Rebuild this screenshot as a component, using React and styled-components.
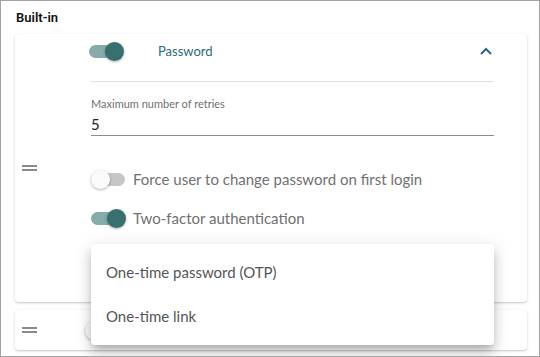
import React from 'react';
import styled, { createGlobalStyle } from 'styled-components';

const GlobalStyle = createGlobalStyle`
  html, body {
    margin: 0;
    padding: 0;
    background: #fff;
  }
  body {
    font-family: "Lato", "Open Sans", sans-serif;
  }
`;

const Frame = styled.div`
  width: 540px;
  height: 357px;
  box-sizing: border-box;
  border: 1px solid #a3a3a3;
  padding: 0 12px 0 14px;
  overflow: hidden;
  background: #fff;
`;

const SectionTitle = styled.h3`
  margin: 0;
  padding: 9px 0 0 1px;
  height: 25px;
  box-sizing: border-box;
  font-family: "Roboto", sans-serif;
  font-weight: 600;
  font-size: 13px;
  line-height: 16px;
  color: #111;
`;

const List = styled.div`
  display: flex;
  flex-direction: column;
  gap: 8px;
  padding-top: 8px;
`;

const Card = styled.div`
  position: relative;
  display: flex;
  align-items: center;
  height: ${p => p.$height}px;
  background: #fff;
  border-radius: 4px;
  box-shadow: 0 1px 3px rgba(0, 0, 0, 0.18), 0 1px 1px rgba(0, 0, 0, 0.06);
`;

const Handle = styled.div`
  flex: 0 0 15px;
  height: 6px;
  margin: 0 ${p => p.$gap}px 0 7px;
  border-top: 2px solid #8a8a8a;
  border-bottom: 2px solid #8a8a8a;
  box-sizing: border-box;
`;

const Body = styled.div`
  position: relative;
  align-self: stretch;
  flex: 1;
  margin-right: 33px;
`;

const Header = styled.div`
  display: flex;
  align-items: center;
  height: 20px;
  padding-top: 7px;
`;

const Title = styled.span`
  flex: 1;
  margin-left: 35px;
  font-size: 13px;
  color: #2c6a78;
`;

const Chevron = styled.svg`
  margin-right: 2px;
`;

const Divider = styled.div`
  height: 1px;
  margin: 20px 0 0 2px;
  background: #dedede;
`;

const Field = styled.div`
  margin: 15px 0 0 2px;
  border-bottom: 1px solid #8c8c8c;
`;

const FieldLabel = styled.div`
  font-size: 11px;
  line-height: 14px;
  color: #6f6f6f;
`;

const FieldValue = styled.div`
  padding: 4px 0 2px;
  font-size: 15px;
  line-height: 18px;
  color: #222;
`;

const OptionRow = styled.div`
  display: flex;
  align-items: center;
  gap: 8px;
  margin-top: ${p => p.$top}px;
  margin-left: ${p => p.$indent || 0}px;
  font-size: 15px;
  color: #707070;
`;

const Track = styled.span`
  position: relative;
  flex: 0 0 34px;
  width: 34px;
  height: 13px;
  border-radius: 7px;
  background: ${p => (p.$on ? '#86abab' : '#c6c6c6')};
`;

const Thumb = styled.span`
  position: absolute;
  top: 50%;
  left: ${p => (p.$on ? '16px' : '0')};
  width: 19px;
  height: 19px;
  margin-top: -9.5px;
  border-radius: 50%;
  background: ${p => (p.$on ? '#37706f' : '#fafafa')};
  box-shadow: 0 1px 3px rgba(0, 0, 0, 0.3);
`;

const Menu = styled.ul`
  position: absolute;
  left: 2px;
  right: 0;
  top: 210px;
  z-index: 2;
  margin: 0;
  padding: 6px 0 7px;
  list-style: none;
  background: #fff;
  border-radius: 4px;
  box-shadow: 0 5px 6px -3px rgba(0, 0, 0, 0.2), 0 9px 12px 1px rgba(0, 0, 0, 0.12),
    0 3px 16px 2px rgba(0, 0, 0, 0.1);
`;

const MenuItem = styled.li`
  height: 44px;
  line-height: 44px;
  padding-left: 15px;
  font-size: 15px;
  color: #555;
`;

const Toggle = ({ on }) => (
  <Track $on={on}>
    <Thumb $on={on} />
  </Track>
);

export default function App() {
  return (
    <>
      <GlobalStyle />
      <Frame>
        <SectionTitle>Built-in</SectionTitle>
        <List>
          <Card $height={268}>
            <Handle $gap={52} />
            <Body>
              <Header>
                <Toggle on />
                <Title>Password</Title>
                <Chevron width="12" height="8" viewBox="0 0 12 8">
                  <polyline points="1,7 6,2 11,7" fill="none" stroke="#2c6a78" strokeWidth="2" />
                </Chevron>
              </Header>
              <Divider />
              <Field>
                <FieldLabel>Maximum number of retries</FieldLabel>
                <FieldValue>5</FieldValue>
              </Field>
              <OptionRow $top={34} $indent={2}>
                <Toggle />
                Force user to change password on first login
              </OptionRow>
              <OptionRow $top={21} $indent={2}>
                <Toggle on />
                Two-factor authentication
              </OptionRow>
              <Menu>
                <MenuItem>One-time password (OTP)</MenuItem>
                <MenuItem>One-time link</MenuItem>
              </Menu>
            </Body>
          </Card>
          <Card $height={40}>
            <Handle $gap={48} />
            <Toggle />
          </Card>
        </List>
      </Frame>
    </>
  );
}
